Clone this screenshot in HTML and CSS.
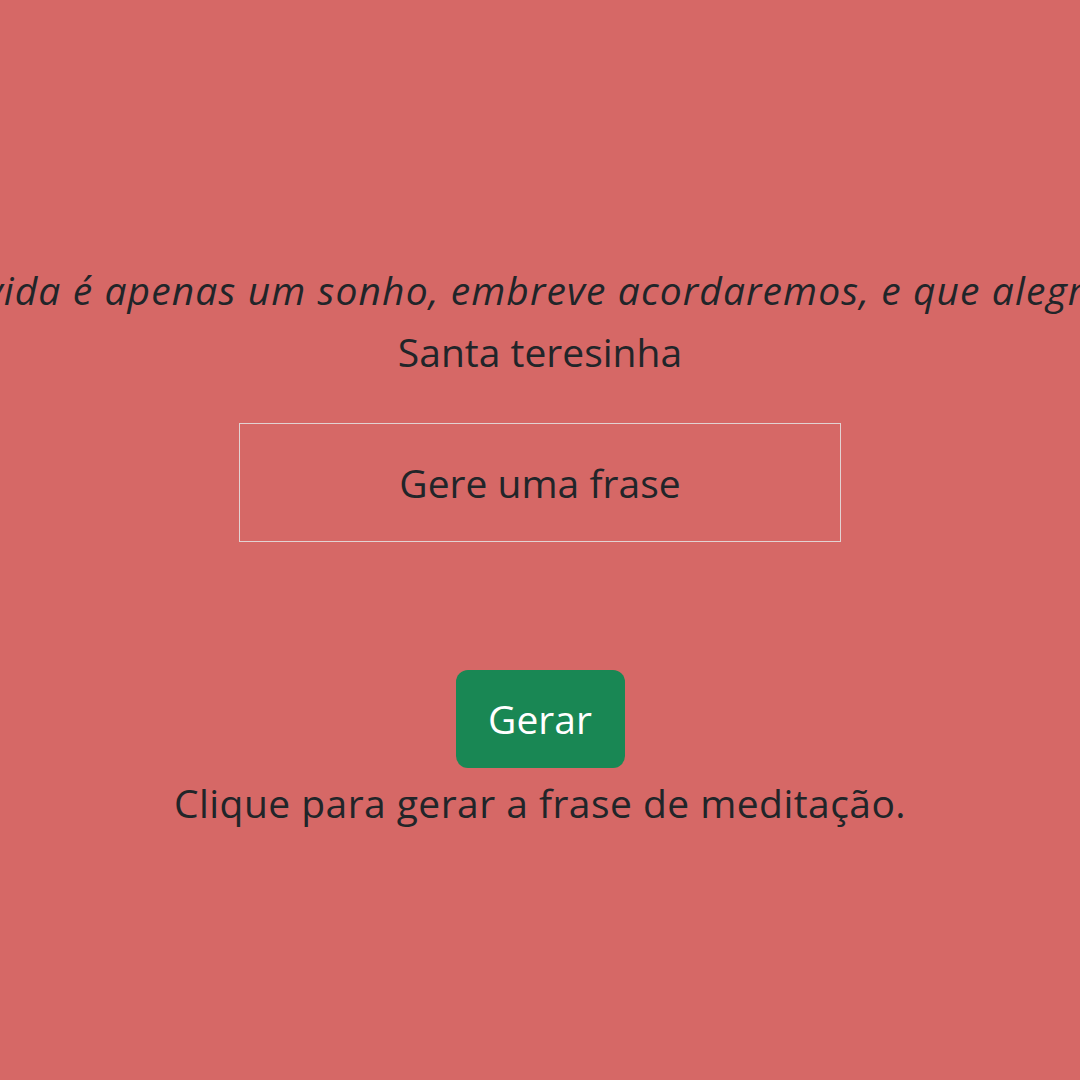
FILE: index.html
```html
<!DOCTYPE html>
<html lang="pt">
<head>
<meta charset="utf-8">
<title>Frases de meditação</title>
<link rel="stylesheet" href="styles.css">
</head>
<body>
<main class="page">
  <p class="quote">A vida é apenas um sonho, embreve acordaremos, e que alegria!</p>
  <p class="author">Santa teresinha</p>
  <div class="phrase-box">Gere uma frase</div>
  <button class="btn-generate" type="button">Gerar</button>
  <p class="hint">Clique para gerar a frase de meditação.</p>
</main>
</body>
</html>
```

FILE: styles.css
```css
html, body {
  margin: 0;
  padding: 0;
}

body {
  background: #d66866;
  color: #212529;
  font-family: "Open Sans", "Noto Sans", sans-serif;
  font-size: 39px;
  line-height: 60px;
  width: 1080px;
  height: 1080px;
  overflow: hidden;
}

.page {
  display: flex;
  flex-direction: column;
  align-items: center;
  padding-top: 260px;
}

.quote {
  margin: 0;
  font-style: italic;
  letter-spacing: 1.1px;
  white-space: nowrap;
  text-align: center;
}

.author {
  margin: 2px 0 0;
  text-align: center;
}

.phrase-box {
  margin-top: 41px;
  width: 600px;
  height: 117px;
  border: 1px solid #e2d2d2;
  display: flex;
  align-items: center;
  justify-content: center;
}

.btn-generate {
  margin-top: 128px;
  font: inherit;
  color: #fff;
  background: #198754;
  border: none;
  border-radius: 12px;
  width: 169px;
  height: 98px;
  padding: 0;
  cursor: pointer;
}

.hint {
  margin: 5px 0 0;
  letter-spacing: 0.45px;
  text-align: center;
}
```
